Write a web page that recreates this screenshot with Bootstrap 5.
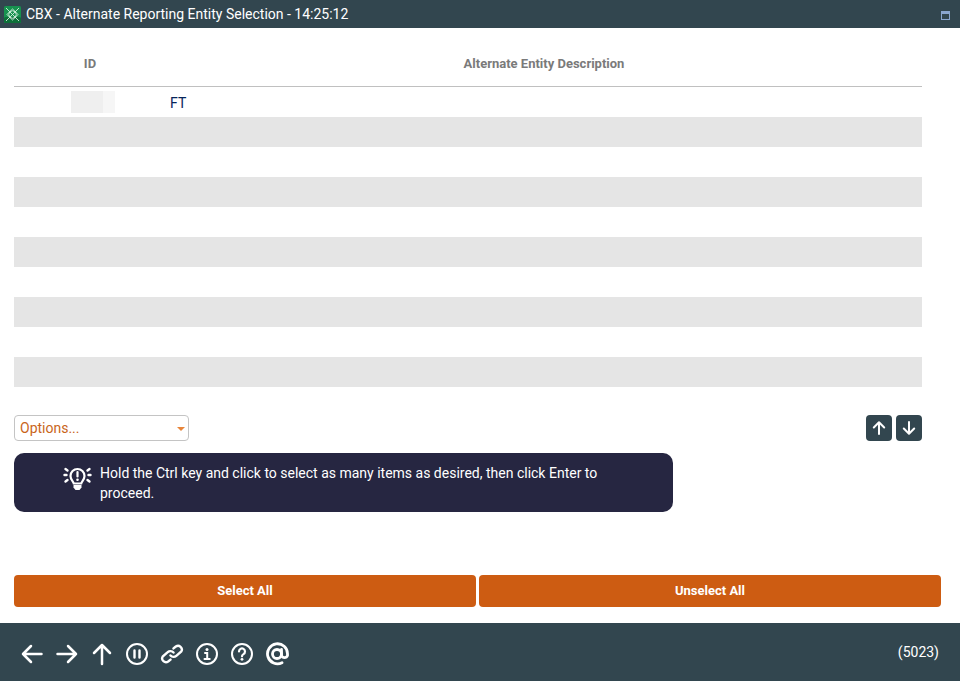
<!DOCTYPE html>
<html lang="en">
<head>
<meta charset="utf-8">
<title>CBX - Alternate Reporting Entity Selection</title>
<link href="https://cdn.jsdelivr.net/npm/bootstrap@5.3.0/dist/css/bootstrap.min.css" rel="stylesheet">
<style>
html,body{height:681px;overflow:hidden}
body{font-family:Roboto,"Liberation Sans",sans-serif;font-size:14px;background:#fff;color:#212529}
.title-strip{height:28px;background:#32464f;color:#fff;font-size:14px;padding:0 10px 0 4px}
.title-strip .logo-gap{margin-left:5px}
.win-btn{width:9px;height:9px;background:#8aa6cf;border-top:3px solid #8aa6cf;position:relative;display:block;margin-top:3px}
.win-btn::after{content:"";position:absolute;left:1px;right:1px;top:0;bottom:1px;background:#32464f}
.main-area{padding:0 19px 0 14px}
.entity-table{width:908px;margin:0;table-layout:fixed;border-collapse:separate;border-spacing:0}
.entity-table th{height:59px;padding:14px 0 0;vertical-align:middle;text-align:center;font-size:13px;font-weight:700;color:#7a7a7a;border-bottom:1px solid #c0c0c0;background:transparent}
.entity-table td{height:30px;padding:2px 4px 0;border:0;vertical-align:middle;font-size:14px;color:#06245a}
.entity-table tr.shade td{background:#e5e5e5}
.blur-id{display:block;width:44px;height:22px;margin-left:53px;margin-top:-2px;background:linear-gradient(90deg,#efefef 0,#efefef 72%,#f6f6f6 72%,#f6f6f6 100%)}
.tools-row{margin-top:28px;width:908px;height:26px}
.opt-select{width:175px;height:26px;border:1px solid #c4c4c4;border-radius:4px;color:#c9651a;font-size:14px;padding:0 5px;background:#fff;position:relative}
.opt-caret{width:0;height:0;border-left:4.500px solid transparent;border-right:4.500px solid transparent;border-top:4.500px solid #e8853a;margin-right:-2px;margin-top:2px}
.sq-btn{width:26px;height:26px;border-radius:4px;background:#32464f;border:0;padding:0}
.hint-box{margin-top:12px;width:659px;height:59px;background:#262641;color:#fff;border-radius:10px;font-size:14px;line-height:20px;padding:10px 60px 0 49px}
.hint-box svg{flex:none;margin-right:8px;margin-top:3px}
.action-row{margin-top:63px;width:927px;gap:3px}
.act-btn{flex:1 1 0;height:32px;background:#cd5c12;color:#fff;border:0;border-radius:4px;font-size:13px;font-weight:700;padding:0}
.foot-strip{position:absolute;left:0;right:0;top:623px;height:58px;background:#32464f;color:#fff;font-size:14px;padding:0 21px 0 20px}
.foot-icons{gap:11px;margin-top:3px}
.foot-icons svg{display:block}
</style>
</head>
<body>
<div class="title-strip d-flex align-items-center justify-content-between">
  <div class="d-flex align-items-center">
    <svg width="17" height="17" viewBox="0 0 17 17"><rect width="17" height="17" rx="1.500" fill="#17924f"/><rect y="11" width="17" height="6" rx="1.500" fill="#0c7039"/><g fill="none" stroke="#d5efdf" stroke-width=".9"><path d="M2 2l13 13M15 2L2 15"/><path d="M3 8.500Q8.500 1 14 8.500Q8.500 16 3 8.500z"/><path d="M8.500 3Q16 8.500 8.500 14Q1 8.500 8.500 3z"/></g></svg>
    <span class="logo-gap">CBX - Alternate Reporting Entity Selection - 14:25:12</span>
  </div>
  <span class="win-btn"></span>
</div>
<div class="main-area">
  <table class="table entity-table">
    <colgroup><col style="width:152px"><col></colgroup>
    <thead><tr><th>ID</th><th>Alternate Entity Description</th></tr></thead>
    <tbody>
      <tr><td><span class="blur-id"></span></td><td>FT</td></tr>
      <tr class="shade"><td></td><td></td></tr>
      <tr><td></td><td></td></tr>
      <tr class="shade"><td></td><td></td></tr>
      <tr><td></td><td></td></tr>
      <tr class="shade"><td></td><td></td></tr>
      <tr><td></td><td></td></tr>
      <tr class="shade"><td></td><td></td></tr>
      <tr><td></td><td></td></tr>
      <tr class="shade"><td></td><td></td></tr>
    </tbody>
  </table>
  <div class="tools-row d-flex justify-content-between">
    <div class="opt-select d-flex align-items-center justify-content-between"><span>Options...</span><span class="opt-caret"></span></div>
    <div class="d-flex gap-1">
      <button class="sq-btn d-flex align-items-center justify-content-center" aria-label="Up"><svg width="16" height="16" viewBox="0 0 16 16" fill="none" stroke="#fff" stroke-width="2" stroke-linecap="round" stroke-linejoin="round"><path d="M8 14V2.500M2.800 7.500 8 2.300l5.200 5.200"/></svg></button>
      <button class="sq-btn d-flex align-items-center justify-content-center" aria-label="Down"><svg width="16" height="16" viewBox="0 0 16 16" fill="none" stroke="#fff" stroke-width="2" stroke-linecap="round" stroke-linejoin="round"><path d="M8 2v11.500M2.800 8.500 8 13.700l5.200-5.200"/></svg></button>
    </div>
  </div>
  <div class="hint-box d-flex align-items-start">
    <svg width="29" height="26" viewBox="0 0 29 26" fill="none" stroke="#fff" stroke-linecap="round"><path stroke-width="2.200" d="M10.800 17.500c-.3-2.200-3.300-3.500-3.300-7.500a7 7 0 0 1 14 0c0 4-3 5.300-3.300 7.500z"/><path stroke-width="2.200" d="M14.500 6v4.500"/><circle cx="14.500" cy="13.700" r="1.300" fill="#fff" stroke="none"/><path fill="#fff" stroke="none" d="M10.500 19h8v2.500l-2 2.500h-4l-2-2.500z"/><path stroke-width="2.400" d="M1.500 9h2M25.500 9h2M2.500 3l2 1.500M26.500 3l-2 1.500M2.500 15.500l2-1.500M26.500 15.500l-2-1.500"/></svg>
    <div>Hold the Ctrl key and click to select as many items as desired, then click Enter to proceed.</div>
  </div>
  <div class="action-row d-flex">
    <button class="act-btn">Select All</button>
    <button class="act-btn">Unselect All</button>
  </div>
</div>
<div class="foot-strip d-flex align-items-center justify-content-between">
  <div class="foot-icons d-flex align-items-center">
    <svg width="24" height="24" viewBox="0 0 24 24" fill="none" stroke="#fff" stroke-width="2.500" stroke-linecap="round" stroke-linejoin="round"><path d="M21.500 12H3M11 4l-8 8 8 8"/></svg>
    <svg width="24" height="24" viewBox="0 0 24 24" fill="none" stroke="#fff" stroke-width="2.500" stroke-linecap="round" stroke-linejoin="round"><path d="M2.500 12H21M13 4l8 8-8 8"/></svg>
    <svg width="24" height="24" viewBox="0 0 24 24" fill="none" stroke="#fff" stroke-width="2.500" stroke-linecap="round" stroke-linejoin="round"><path d="M12 22V3M4 11l8-8 8 8"/></svg>
    <svg width="24" height="24" viewBox="0 0 24 24" fill="none" stroke="#fff" stroke-width="2" stroke-linecap="round"><circle cx="12" cy="12" r="10"/><path d="M9.500 8.500v7M14.500 8.500v7" stroke-width="2.400"/></svg>
    <svg width="24" height="24" viewBox="0 0 24 24" fill="none" stroke="#fff" stroke-width="2.400" stroke-linecap="round"><path d="M10.500 13.500a4 4 0 0 0 5.800.3l5-4.300a3.800 3.800 0 0 0-5.500-5l-2.300 1.900"/><path d="M13.500 10.500a4 4 0 0 0-5.800-.3l-5 4.300a3.800 3.800 0 0 0 5.500 5l2.300-1.900"/></svg>
    <svg width="24" height="24" viewBox="0 0 24 24" fill="none" stroke="#fff" stroke-width="2" stroke-linecap="round"><circle cx="12" cy="12" r="10"/><circle cx="12" cy="7.500" r="1.500" fill="#fff" stroke="none"/><path d="M10 11h2.200v6M9.500 17h5.200"/></svg>
    <svg width="24" height="24" viewBox="0 0 24 24" fill="none" stroke="#fff" stroke-width="2" stroke-linecap="round"><circle cx="12" cy="12" r="10"/><path d="M9 9.500a3 3 0 1 1 4.500 2.600c-1 .6-1.500 1.100-1.500 2.200" stroke-width="2.200"/><circle cx="12" cy="17.300" r="1.400" fill="#fff" stroke="none"/></svg>
    <svg width="24" height="24" viewBox="0 0 24 24" fill="none" stroke="#fff" stroke-width="2.800" stroke-linecap="round"><circle cx="12" cy="12" r="4.500"/><path d="M16.500 7.500v6a3.200 3.200 0 0 0 6 0V12A10 10 0 1 0 17 20.700"/></svg>
  </div>
  <div class="foot-code">(5023)</div>
</div>
<script src="https://cdn.jsdelivr.net/npm/bootstrap@5.3.0/dist/js/bootstrap.bundle.min.js"></script>
</body>
</html>
